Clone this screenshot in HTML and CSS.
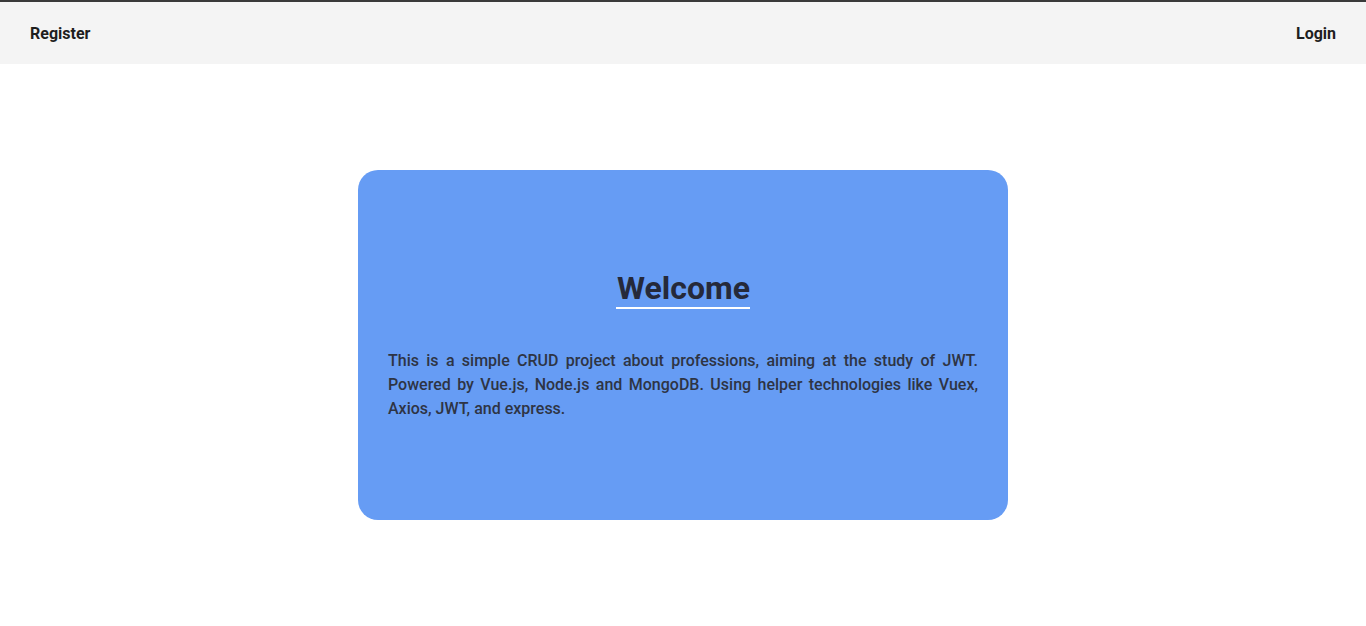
FILE: index.html
```html
<!DOCTYPE html>
<html>
<head>
<meta charset="utf-8">
<link rel="stylesheet" href="styles.css">
</head>
<body>
<header class="nav">
  <a class="nav-link">Register</a>
  <a class="nav-link">Login</a>
</header>
<main class="main">
  <section class="card">
    <h1 class="title">Welcome</h1>
    <p class="desc">This is a simple CRUD project about professions, aiming at the study of JWT. Powered by Vue.js, Node.js and MongoDB. Using helper technologies like Vuex, Axios, JWT, and express.</p>
  </section>
</main>
</body>
</html>
```

FILE: styles.css
```css
html, body {
  margin: 0;
  padding: 0;
  height: 100%;
}
body {
  font-family: Roboto, "Liberation Sans", sans-serif;
  color: #2c3e50;
  background: #fff;
  display: flex;
  flex-direction: column;
}
.nav {
  box-sizing: border-box;
  height: 64px;
  border-top: 2px solid #3a3a3a;
  background: #f4f4f4;
  display: flex;
  justify-content: space-between;
  align-items: center;
  padding: 0 30px;
}
.nav-link {
  font-size: 16px;
  font-weight: 700;
  color: #1e1e1e;
  cursor: pointer;
}
.main {
  flex: 1;
  display: flex;
  align-items: center;
  justify-content: center;
}
.card {
  box-sizing: border-box;
  width: 650px;
  height: 350px;
  border-radius: 20px;
  background: #669cf4;
  padding: 1px 30px 0;
  display: flex;
  flex-direction: column;
  align-items: center;
  justify-content: center;
}
.title {
  margin: 0;
  padding: 0 0 0 1px;
  font-size: 32px;
  font-weight: 700;
  line-height: 37px;
  color: #25293a;
  border-bottom: 2px solid #fff;
}
.desc {
  margin: 40px 0 0;
  font-size: 16px;
  font-weight: 500;
  line-height: 24px;
  text-align: justify;
  color: #2e3444;
}
```
